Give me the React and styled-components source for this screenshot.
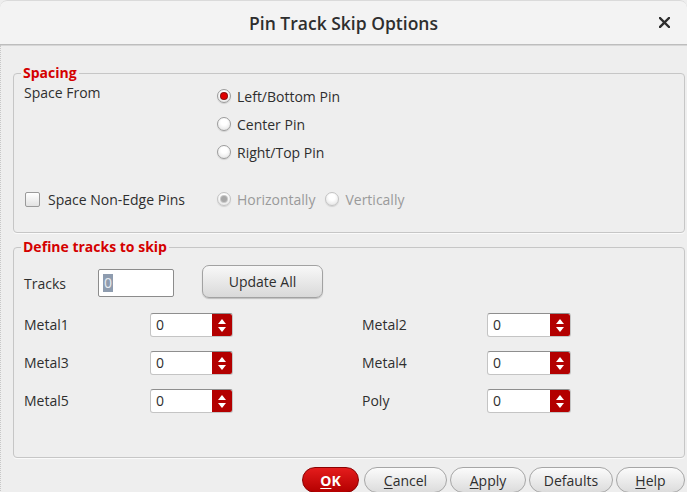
import React from 'react';
import styled, { createGlobalStyle } from 'styled-components';

const GlobalStyle = createGlobalStyle`
  html, body {
    margin: 0;
    padding: 0;
    background: #eeeeee;
  }
  body {
    font-family: "Open Sans", "Noto Sans", sans-serif;
    font-size: 14px;
    color: #2e2e2e;
  }
`;

const Window = styled.div`
  width: 687px;
  height: 492px;
  overflow: hidden;
  background: #eeeeee;
  border-top-left-radius: 7px;
  border-top-right-radius: 7px;
`;

const TitleBar = styled.div`
  height: 45px;
  display: grid;
  grid-template-columns: 1fr auto 1fr;
  align-items: center;
  background: #f3f3f3;
  border-top: 1px solid #dadada;
  border-bottom: 1px solid #bdbdbd;
  box-shadow: 0 1px 0 #d6d6d6;
  box-sizing: border-box;
  border-top-left-radius: 7px;
  border-top-right-radius: 7px;
  h1 {
    grid-column: 2;
    margin: 0;
    font-size: 17.5px;
    font-weight: 600;
    color: #2e2e2e;
  }
`;

const Close = styled.svg`
  justify-self: end;
  margin-right: 17px;
  width: 11px;
  height: 11px;
`;

const Body = styled.div`
  padding: 19px 2px 0 12px;
  border-left: 1px dotted #c8c8c8;
  box-sizing: border-box;
`;

const Group = styled.fieldset`
  margin: ${(p) => (p.$first ? '0' : '5px 0 0')};
  padding: 0 10px ${(p) => p.$pb}px 10px;
  border: 1px solid #c6c6c6;
  border-radius: 4px;
  box-shadow: 0 1px 0 #fafafa;
  legend {
    margin-left: -3px;
    padding: 0 2px;
    font-size: 14px;
    font-weight: 700;
    line-height: 18px;
    color: #d40000;
  }
`;

const TwoCol = styled.div`
  display: grid;
  grid-template-columns: 193px 1fr;
  align-items: ${(p) => p.$align || 'start'};
  margin-top: ${(p) => p.$mt || 0}px;
`;

const Label = styled.div`
  line-height: 18px;
  padding-top: ${(p) => p.$pt || 0}px;
  width: ${(p) => (p.$w ? `${p.$w}px` : 'auto')};
  color: ${(p) => (p.$disabled ? '#9a9a9a' : '#2e2e2e')};
  white-space: nowrap;
`;

const RadioList = styled.div`
  display: flex;
  flex-direction: ${(p) => (p.$row ? 'row' : 'column')};
`;

const OptionRow = styled.label`
  display: flex;
  align-items: center;
  gap: 6px;
  height: 28px;
  margin-right: ${(p) => p.$mr || 0}px;
  color: ${(p) => (p.$disabled ? '#9a9a9a' : '#2e2e2e')};
`;

const RadioDot = styled.span`
  width: 14px;
  height: 14px;
  box-sizing: border-box;
  border-radius: 50%;
  border: 1px solid ${(p) => (p.$disabled ? '#c4c4c4' : '#9c9c9c')};
  background: radial-gradient(circle at 50% 35%, #ffffff 30%, #dedede 100%);
  box-shadow: 0 1px 1px rgba(0, 0, 0, 0.12);
  display: flex;
  align-items: center;
  justify-content: center;
  &::after {
    content: '';
    display: ${(p) => (p.$checked ? 'block' : 'none')};
    width: 6px;
    height: 6px;
    border-radius: 50%;
    background: ${(p) => (p.$disabled ? '#a8a8a8' : '#e00000')};
    box-shadow: 0 0 0 1px ${(p) => (p.$disabled ? '#c8c8c8' : '#8a1010')};
  }
`;

const CheckLabel = styled.label`
  display: flex;
  align-items: center;
  height: 28px;
`;

const CheckBox = styled.span`
  width: 15px;
  height: 15px;
  box-sizing: border-box;
  margin-left: 1px;
  margin-right: 8px;
  border: 1px solid #9a9a9a;
  border-radius: 2px;
  background: linear-gradient(#ffffff, #e2e2e2);
`;

const TracksRow = styled.div`
  display: flex;
  align-items: center;
  height: 34px;
  margin-top: 8px;
`;

const TextField = styled.div`
  width: 76px;
  height: 28px;
  box-sizing: border-box;
  margin-top: 3px;
  padding-left: 4px;
  border: 1px solid #8c8c8c;
  border-radius: 2px;
  background: #ffffff;
  display: flex;
  align-items: center;
  span {
    background: #8e9caf;
    color: #e8ecf2;
    line-height: 18px;
    padding: 0 1px;
  }
`;

const PushButton = styled.button`
  width: 121px;
  height: 33px;
  margin-left: 28px;
  border: 1px solid #a2a2a2;
  border-radius: 7px;
  background: linear-gradient(#f8f8f8, #d9d9d9);
  box-shadow: 0 1px 1px rgba(0, 0, 0, 0.2);
  font-family: inherit;
  font-size: 14px;
  color: #2e2e2e;
`;

const SpinGrid = styled.div`
  display: grid;
  grid-template-columns: 126px 212px 125px 84px;
  grid-auto-rows: 38px;
  align-items: center;
  margin-top: 8px;
`;

const Spin = styled.div`
  width: ${(p) => p.$w}px;
  height: 24px;
  display: flex;
  box-sizing: border-box;
  border: 1px solid #c4c4c4;
  border-top-color: #8e8e8e;
  border-radius: 3px;
  background: #ffffff;
  overflow: hidden;
`;

const SpinValue = styled.div`
  flex: 1;
  padding-left: 5px;
  line-height: 22px;
  color: #2e2e2e;
`;

const Stepper = styled.div`
  width: 20px;
  background: #b30000;
  display: flex;
  flex-direction: column;
  align-items: center;
  justify-content: center;
  gap: 3px;
`;

const Arrow = styled.span`
  width: 0;
  height: 0;
  border-left: 4.5px solid transparent;
  border-right: 4.5px solid transparent;
  ${(p) => (p.$up ? 'border-bottom: 5px solid #ffffff;' : 'border-top: 5px solid #ffffff;')}
`;

const ButtonBar = styled.div`
  display: flex;
  justify-content: flex-end;
  gap: 3px;
  margin-top: 9px;
`;

const DlgButton = styled.button`
  width: ${(p) => p.$w}px;
  height: 26px;
  padding: 0;
  margin-right: ${(p) => (p.$primary ? 2 : 0)}px;
  border-radius: 13px;
  border: 1px solid ${(p) => (p.$primary ? '#8a0000' : '#a6a6a6')};
  background: ${(p) =>
    p.$primary ? 'linear-gradient(#e41c1c, #b40000)' : 'linear-gradient(#fbfbfb, #dcdcdc)'};
  color: ${(p) => (p.$primary ? '#ffffff' : '#2e2e2e')};
  font-family: inherit;
  font-size: 14px;
  font-weight: ${(p) => (p.$primary ? 700 : 400)};
  u {
    text-decoration-thickness: 1px;
    text-underline-offset: 2px;
  }
`;

function Radio({ label, checked, disabled, mr }) {
  return (
    <OptionRow $disabled={disabled} $mr={mr}>
      <RadioDot $checked={checked} $disabled={disabled} />
      {label}
    </OptionRow>
  );
}

function SpinBox({ w = 83 }) {
  return (
    <Spin $w={w}>
      <SpinValue>0</SpinValue>
      <Stepper>
        <Arrow $up />
        <Arrow />
      </Stepper>
    </Spin>
  );
}

const layers = [
  ['Metal1', 'Metal2'],
  ['Metal3', 'Metal4'],
  ['Metal5', 'Poly'],
];

export default function App() {
  return (
    <Window>
      <GlobalStyle />
      <TitleBar>
        <h1>Pin Track Skip Options</h1>
        <Close viewBox="0 0 11 11">
          <path d="M1 1 L10 10 M10 1 L1 10" stroke="#2e2e2e" strokeWidth="2.4" strokeLinecap="square" />
        </Close>
      </TitleBar>
      <Body>
        <Group $first $pb={19}>
          <legend>Spacing</legend>
          <TwoCol>
            <Label $pt={2}>Space From</Label>
            <RadioList>
              <Radio label="Left/Bottom Pin" checked />
              <Radio label="Center Pin" />
              <Radio label="Right/Top Pin" />
            </RadioList>
          </TwoCol>
          <TwoCol $mt={19} $align="center">
            <CheckLabel>
              <CheckBox />
              Space Non-Edge Pins
            </CheckLabel>
            <RadioList $row>
              <Radio label="Horizontally" checked disabled mr={10} />
              <Radio label="Vertically" disabled />
            </RadioList>
          </TwoCol>
        </Group>

        <Group $pb={37}>
          <legend>Define tracks to skip</legend>
          <TracksRow>
            <Label $pt={6} $w={74}>
              Tracks
            </Label>
            <TextField>
              <span>0</span>
            </TextField>
            <PushButton>Update All</PushButton>
          </TracksRow>
          <SpinGrid>
            {layers.map(([a, b]) => (
              <React.Fragment key={a}>
                <Label>{a}</Label>
                <SpinBox />
                <Label>{b}</Label>
                <SpinBox w={84} />
              </React.Fragment>
            ))}
          </SpinGrid>
        </Group>

        <ButtonBar>
          <DlgButton $primary $w={57}>
            <u>O</u>K
          </DlgButton>
          <DlgButton $w={83}>
            <u>C</u>ancel
          </DlgButton>
          <DlgButton $w={76}>
            <u>A</u>pply
          </DlgButton>
          <DlgButton $w={84}>Defaults</DlgButton>
          <DlgButton $w={69}>
            <u>H</u>elp
          </DlgButton>
        </ButtonBar>
      </Body>
    </Window>
  );
}
